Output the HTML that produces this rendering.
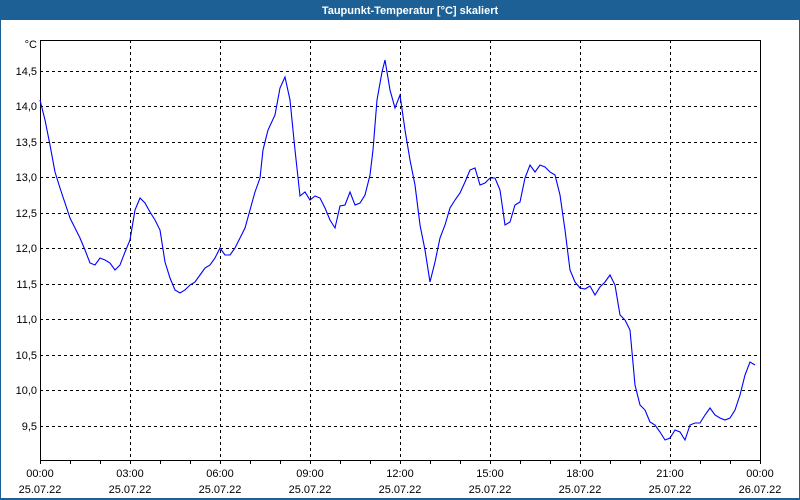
<!DOCTYPE html>
<html><head><style>
body{margin:0;width:800px;height:500px;overflow:hidden;background:#fff;font-family:"Liberation Sans",sans-serif}
</style></head><body>
<svg width="800" height="500" xmlns="http://www.w3.org/2000/svg" style="display:block">
<rect x="0" y="0" width="800" height="500" fill="#1d6096"/>
<rect x="1" y="20" width="798" height="478" fill="#fff"/>
<text x="410" y="14" fill="#fff" font-size="11" font-weight="bold" text-anchor="middle" font-family="Liberation Sans, sans-serif">Taupunkt-Temperatur [°C] skaliert</text>
<g stroke="#000" stroke-dasharray="3,3" stroke-width="1">
<path d="M40 71.5H760M40 106.5H760M40 142.5H760M40 177.5H760M40 213.5H760M40 248.5H760M40 284.5H760M40 319.5H760M40 355.5H760M40 390.5H760M40 426.5H760"/>
<path d="M130.5 40V460M220.5 40V460M310.5 40V460M400.5 40V460M490.5 40V460M580.5 40V460M670.5 40V460"/>
</g>
<path d="M40.5 40V460.5H760.5V40M40 40.5H760" stroke="#000" fill="none"/>
<path d="M70.5 460v4M100.5 460v4M160.5 460v4M190.5 460v4M250.5 460v4M280.5 460v4M340.5 460v4M370.5 460v4M430.5 460v4M460.5 460v4M520.5 460v4M550.5 460v4M610.5 460v4M640.5 460v4M700.5 460v4M730.5 460v4M40.5 460v4M130.5 460v4M220.5 460v4M310.5 460v4M400.5 460v4M490.5 460v4M580.5 460v4M670.5 460v4M760.5 460v4" stroke="#000"/>
<g font-size="11" fill="#000" text-anchor="end" font-family="Liberation Sans, sans-serif">
<text x="37" y="48">°C</text>
<text x="37" y="75">14,5</text><text x="37" y="110">14,0</text><text x="37" y="146">13,5</text><text x="37" y="181">13,0</text><text x="37" y="217">12,5</text><text x="37" y="252">12,0</text><text x="37" y="288">11,5</text><text x="37" y="323">11,0</text><text x="37" y="359">10,5</text><text x="37" y="394">10,0</text><text x="37" y="430">9,5</text>
</g>
<g font-size="11" fill="#000" text-anchor="middle" font-family="Liberation Sans, sans-serif">
<text x="40" y="477">00:00</text><text x="130" y="477">03:00</text><text x="220" y="477">06:00</text><text x="310" y="477">09:00</text><text x="400" y="477">12:00</text><text x="490" y="477">15:00</text><text x="580" y="477">18:00</text><text x="670" y="477">21:00</text><text x="760" y="477">00:00</text>
<text x="40" y="493">25.07.22</text><text x="130" y="493">25.07.22</text><text x="220" y="493">25.07.22</text><text x="310" y="493">25.07.22</text><text x="400" y="493">25.07.22</text><text x="490" y="493">25.07.22</text><text x="580" y="493">25.07.22</text><text x="670" y="493">25.07.22</text><text x="760" y="493">26.07.22</text>
</g>
<polyline fill="none" stroke="#0000ff" stroke-width="1.1" points="40,100 45,120 50,145 55,172 60,188 65,203 70,218 75,228 80,238 85,250 90,263 95,265 100,258 105,260 110,263 115,270 120,265 125,252 130,240 135,210 140,198 145,203 150,212 155,220 160,230 165,262 170,278 175,290 180,293 185,290 190,285 195,282 200,275 205,268 210,265 215,258 220,248 225,255 230,255 235,248 240,238 245,228 250,210 255,192 260,178 263,150 268,130 275,115 280,88 285,77 290,100 295,150 300,196 305,192 310,200 315,196 320,198 325,208 330,220 335,228 340,206 345,205 350,192 355,205 360,203 365,195 370,175 373,150 377,100 382,72 385,60 390,90 395,108 400,95 405,130 410,160 415,185 420,225 425,250 430,282 435,262 440,238 445,225 450,208 455,200 460,193 465,182 470,170 475,168 480,185 485,183 490,178 495,178 500,190 505,225 510,222 515,205 520,202 525,178 530,165 535,172 540,165 545,167 550,172 555,175 560,195 565,230 570,270 575,282 580,288 585,289 590,286 595,295 600,287 605,282 610,275 615,285 620,315 625,320 630,330 635,385 640,405 645,410 650,422 655,425 660,432 665,440 670,438 675,430 680,432 685,440 690,425 695,423 700,423 705,415 710,408 715,415 720,418 725,420 730,418 735,410 740,395 745,375 750,362 755,365"/>
</svg>
</body></html>
